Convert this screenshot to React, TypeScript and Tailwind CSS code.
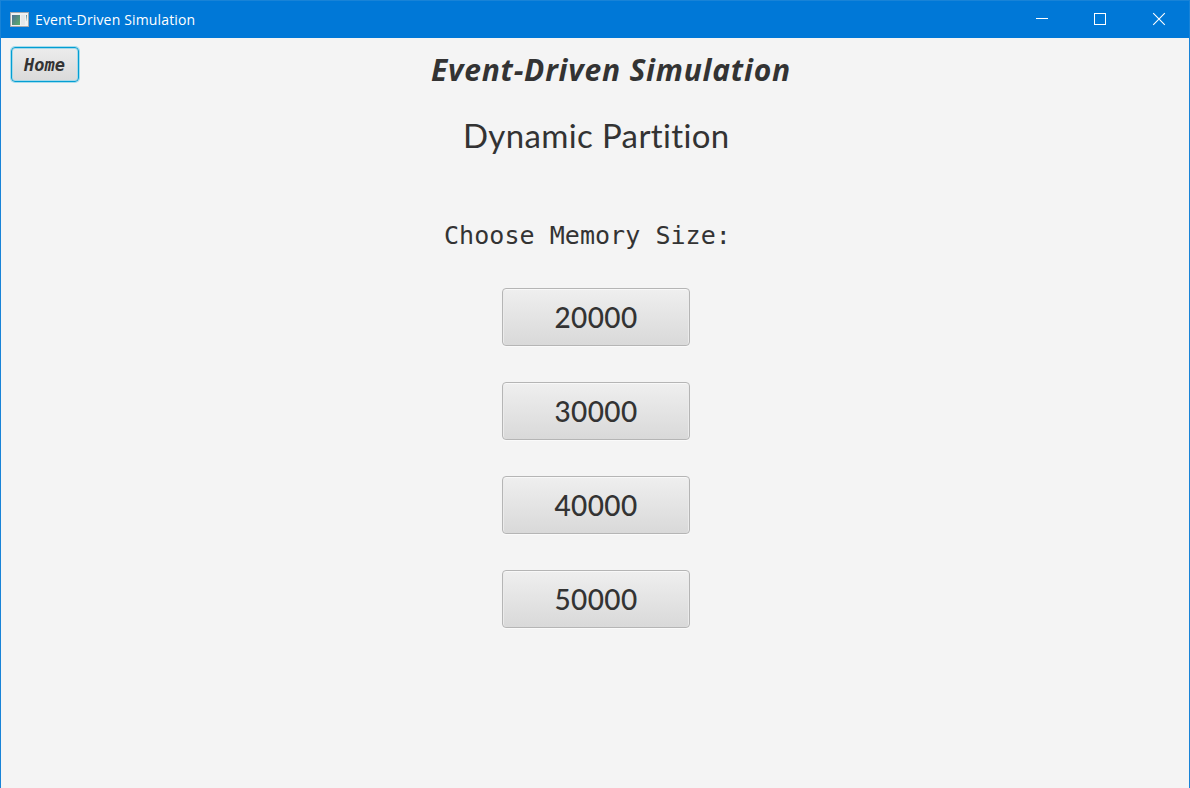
const sizes = ["20000", "30000", "40000", "50000"];

function AppIcon() {
  return (
    <svg width="19" height="15" viewBox="0 0 19 15" className="block" shapeRendering="crispEdges">
      <defs>
        <linearGradient id="pane" x1="0" y1="0" x2="1" y2="1">
          <stop offset="0" stopColor="#4d6f98" />
          <stop offset="1" stopColor="#5cae68" />
        </linearGradient>
        <linearGradient id="side" x1="0" y1="0" x2="0" y2="1">
          <stop offset="0" stopColor="#5b8fa0" />
          <stop offset="1" stopColor="#d5e8da" />
        </linearGradient>
      </defs>
      <rect x="0" y="0" width="19" height="15" fill="#a3a8ad" />
      <rect x="1" y="1" width="17" height="13" fill="#f1f1f1" />
      <rect x="2" y="3" width="8" height="10" fill="url(#pane)" />
      <rect x="11" y="3" width="4" height="10" fill="#e4e7e9" />
      <rect x="16" y="3" width="1" height="6" fill="url(#side)" />
    </svg>
  );
}

function TitleBar() {
  return (
    <header className="flex h-[38px] shrink-0 items-center border-t border-[#1883d7] bg-[#0078d7] pl-[9px] text-white">
      <AppIcon />
      <span className="ml-1.5 whitespace-nowrap font-['Open_Sans',sans-serif] text-[14px] leading-5 tracking-[0.15px]">
        Event-Driven Simulation
      </span>
      <div className="ml-auto flex">
        <svg width="58" height="37" viewBox="0 0 58 37" className="block" shapeRendering="crispEdges">
          <rect x="23" y="17" width="12" height="1" fill="white" />
        </svg>
        <svg width="58" height="37" viewBox="0 0 58 37" className="block" shapeRendering="crispEdges">
          <rect x="23.5" y="12.5" width="11" height="11" fill="none" stroke="white" />
        </svg>
        <svg width="60" height="37" viewBox="0 0 60 37" className="block">
          <path d="M24.2 12.2 L35.8 23.8 M35.8 12.2 L24.2 23.8" stroke="white" strokeWidth="1.1" />
        </svg>
      </div>
    </header>
  );
}

export default function App() {
  return (
    <div className="flex h-[788px] w-[1190px] flex-col overflow-hidden border-x border-x-[#1883d7] bg-[#f4f4f4] text-[#333]">
      <TitleBar />
      <main className="flex flex-1">
        <div className="w-[430px] pl-2.5 pt-[9px]">
          <button className="flex h-[35px] w-[68px] items-center justify-center rounded-[4px] border border-[#039ed3] bg-gradient-to-b from-[#ececec] to-[#dadada] pr-px pt-px font-['DejaVu_Sans_Mono',monospace] text-[17px] font-bold italic leading-5 shadow-[0_0_0_1px_#a5dcec,inset_0_0_0_1px_#a5d8e8]">
            Home
          </button>
        </div>
        <div className="flex w-[360px] flex-col">
          <h1 className="mt-[12px] h-10 whitespace-nowrap font-['Open_Sans',sans-serif] text-[30px] font-bold italic leading-10 tracking-[0.78px]">
            Event-Driven Simulation
          </h1>
          <h2 className="ml-[32px] mt-[25px] h-10 whitespace-nowrap font-['Lato',sans-serif] text-[33px] leading-10 tracking-[0.36px] [font-variant-ligatures:none]">
            Dynamic Partition
          </h2>
          <p className="ml-[13px] mt-[61px] h-10 whitespace-nowrap font-['DejaVu_Sans_Mono',monospace] text-[25px] leading-10 tracking-[0.05px]">
            Choose Memory Size:
          </p>
          <div className="ml-[71px] mt-8 flex flex-col gap-9">
            {sizes.map((size) => (
              <button
                key={size}
                className="flex h-[58px] w-[188px] items-center justify-center rounded-[4px] border border-[#b5b5b5] bg-gradient-to-b from-[#efefef] to-[#d9d9d9] font-['Lato',sans-serif] text-[28px] font-medium leading-9 tracking-[0.4px] shadow-[inset_0_1px_0_#f8f8f8,inset_1px_0_0_#ebebeb,inset_-1px_0_0_#ebebeb,0_1px_0_#fafafa]"
              >
                {size}
              </button>
            ))}
          </div>
        </div>
      </main>
    </div>
  );
}
